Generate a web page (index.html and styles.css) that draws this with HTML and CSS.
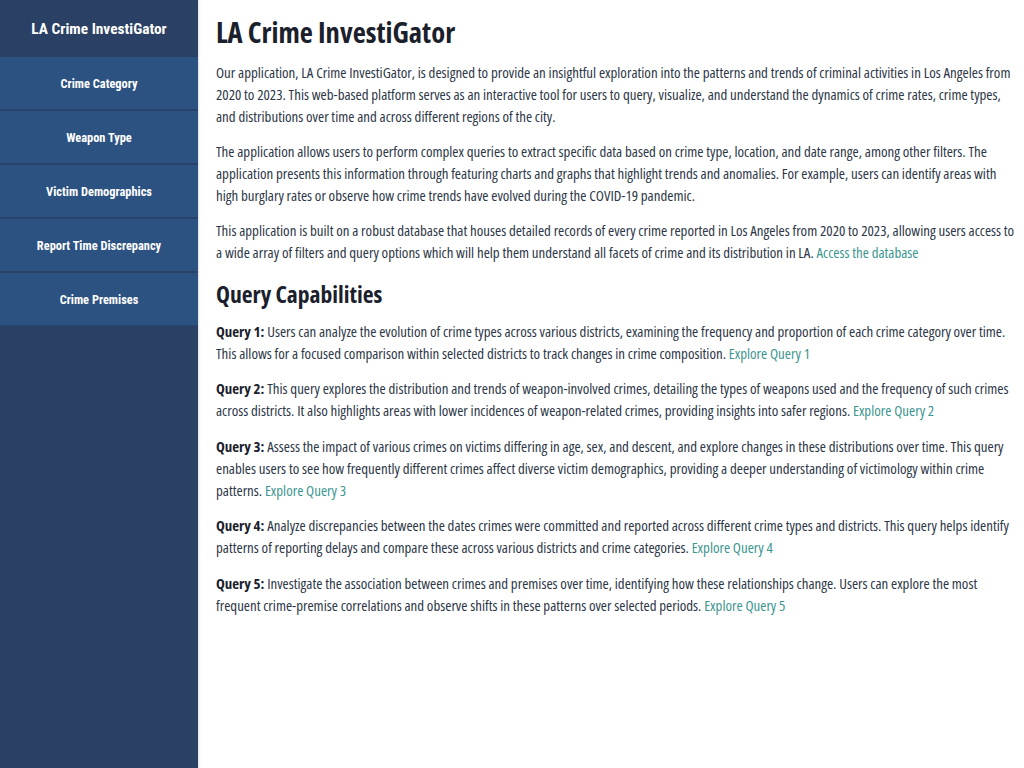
FILE: index.html
```html
<!DOCTYPE html>
<html lang="en">
<head>
<meta charset="utf-8">
<title>LA Crime InvestiGator</title>
<link rel="stylesheet" href="styles.css">
</head>
<body>
<div class="layout">
  <aside class="sidebar">
    <div class="brand">LA Crime InvestiGator</div>
    <nav class="nav">
      <a class="nav-item" href="#">Crime Category</a>
      <a class="nav-item" href="#">Weapon Type</a>
      <a class="nav-item" href="#">Victim Demographics</a>
      <a class="nav-item" href="#">Report Time Discrepancy</a>
      <a class="nav-item" href="#">Crime Premises</a>
    </nav>
  </aside>
  <main class="content">
    <h1 class="title">LA Crime InvestiGator</h1>
    <p class="text">Our application, LA Crime InvestiGator, is designed to provide an insightful exploration into the patterns and trends of criminal activities in Los Angeles from<br>2020 to 2023. This web-based platform serves as an interactive tool for users to query, visualize, and understand the dynamics of crime rates, crime types,<br>and distributions over time and across different regions of the city.</p>
    <p class="text">The application allows users to perform complex queries to extract specific data based on crime type, location, and date range, among other filters. The<br>application presents this information through featuring charts and graphs that highlight trends and anomalies. For example, users can identify areas with<br>high burglary rates or observe how crime trends have evolved during the COVID-19 pandemic.</p>
    <p class="text">This application is built on a robust database that houses detailed records of every crime reported in Los Angeles from 2020 to 2023, allowing users access to<br>a wide array of filters and query options which will help them understand all facets of crime and its distribution in LA. <a class="link" href="#">Access the database</a></p>
    <h2 class="subtitle">Query Capabilities</h2>
    <p class="text query"><strong>Query 1:</strong> Users can analyze the evolution of crime types across various districts, examining the frequency and proportion of each crime category over time.<br>This allows for a focused comparison within selected districts to track changes in crime composition. <a class="link" href="#">Explore Query 1</a></p>
    <p class="text query"><strong>Query 2:</strong> This query explores the distribution and trends of weapon-involved crimes, detailing the types of weapons used and the frequency of such crimes<br>across districts. It also highlights areas with lower incidences of weapon-related crimes, providing insights into safer regions. <a class="link" href="#">Explore Query 2</a></p>
    <p class="text query"><strong>Query 3:</strong> Assess the impact of various crimes on victims differing in age, sex, and descent, and explore changes in these distributions over time. This query<br>enables users to see how frequently different crimes affect diverse victim demographics, providing a deeper understanding of victimology within crime<br>patterns. <a class="link" href="#">Explore Query 3</a></p>
    <p class="text query"><strong>Query 4:</strong> Analyze discrepancies between the dates crimes were committed and reported across different crime types and districts. This query helps identify<br>patterns of reporting delays and compare these across various districts and crime categories. <a class="link" href="#">Explore Query 4</a></p>
    <p class="text query"><strong>Query 5:</strong> Investigate the association between crimes and premises over time, identifying how these relationships change. Users can explore the most<br>frequent crime-premise correlations and observe shifts in these patterns over selected periods. <a class="link" href="#">Explore Query 5</a></p>
  </main>
</div>
</body>
</html>
```

FILE: styles.css
```css
html, body {
  margin: 0;
  padding: 0;
  height: 100%;
  background: #ffffff;
}

body {
  font-family: "Open Sans", "DejaVu Sans Condensed", sans-serif;
  font-stretch: 75%;
}

.layout {
  display: flex;
  min-height: 100vh;
}

.sidebar {
  width: 198px;
  flex: 0 0 198px;
  background: #2a4064;
  color: #ffffff;
  display: flex;
  flex-direction: column;
  box-shadow: 1px 0 2px rgba(0, 0, 0, 0.12);
  font-family: "Roboto", "DejaVu Sans Condensed", sans-serif;
  font-stretch: 75%;
}

.brand {
  height: 57px;
  display: flex;
  align-items: center;
  justify-content: center;
  font-weight: bold;
  font-size: 15.4px;
  color: #ffffff;
}

.nav {
  display: flex;
  flex-direction: column;
}

.nav-item {
  height: 52px;
  display: flex;
  align-items: center;
  justify-content: center;
  background: #2c5282;
  border-bottom: 2px solid #284269;
  color: #ffffff;
  text-decoration: none;
  font-weight: bold;
  font-size: 12.4px;
}

.content {
  flex: 1;
  padding: 14px 4px 0 18px;
  color: #2d3748;
}

.title {
  margin: 0 0 11px;
  font-size: 28.6px;
  line-height: 36px;
  font-weight: bold;
  color: #1a202c;
}

.subtitle {
  margin: 16px 0 11px;
  font-size: 23.6px;
  line-height: 30px;
  font-weight: bold;
  color: #1a202c;
}

.text {
  margin: 0 0 13px;
  font-size: 14.9px;
  line-height: 22px;
}

.query {
  margin-bottom: 13.4px;
}

.text strong {
  color: #1a202c;
}

.link {
  color: #3d9690;
  text-decoration: none;
}
```
